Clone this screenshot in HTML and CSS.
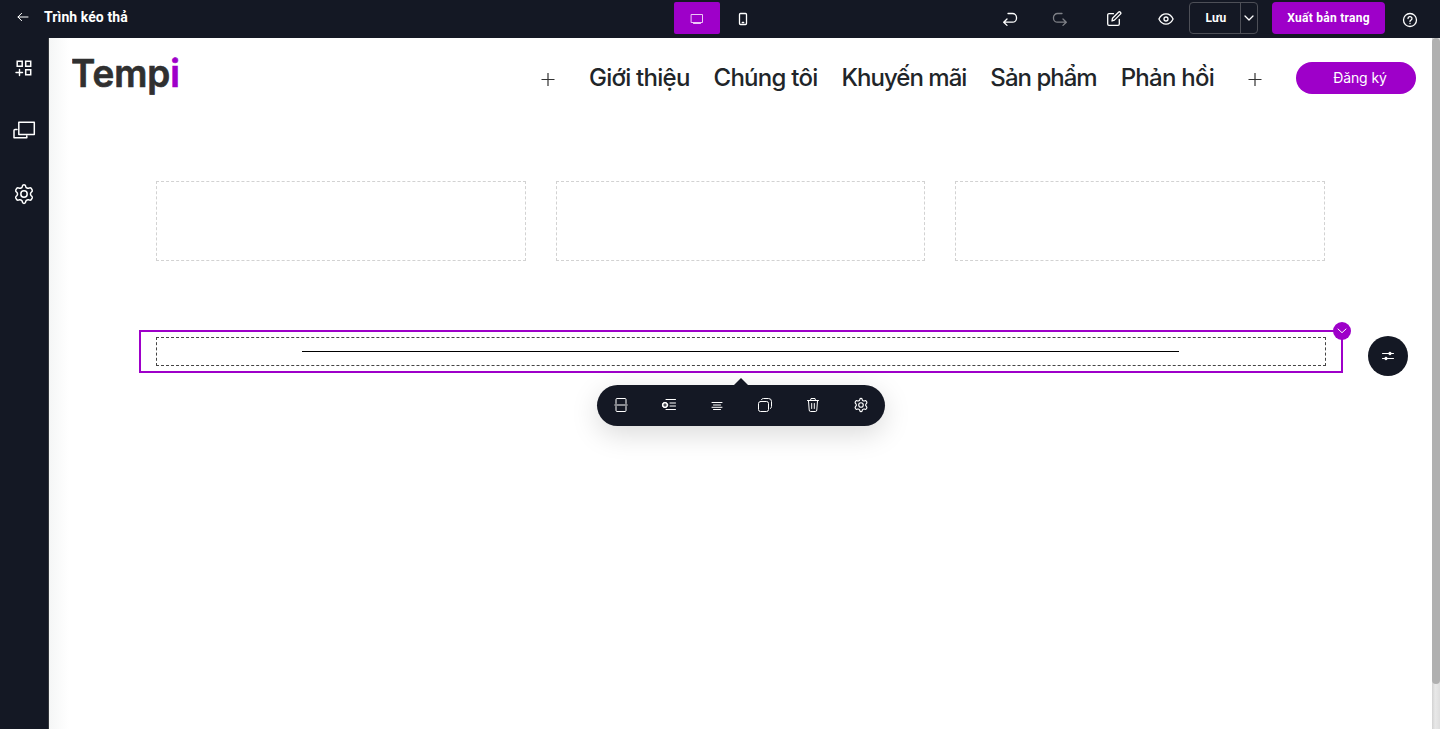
FILE: index.html
```html
<!DOCTYPE html>
<html lang="vi">
<head>
<meta charset="utf-8">
<title>Trình kéo thả</title>
<link rel="stylesheet" href="styles.css">
</head>
<body>
<svg class="defs" width="0" height="0">
  <symbol id="gear" viewBox="0 0 24 24"><path d="M10.3 3.3 Q10.6 2 12 2 Q13.4 2 13.7 3.3 L14 4.5 Q14.2 5.2 15.2 5.6 Q16 6.1 16.8 5.9 L18 5.5 Q19.2 5.2 20 6.4 L20.7 7.7 Q21.2 8.8 20.3 9.7 L19.5 10.5 Q18.9 11.2 18.9 12 Q18.9 12.8 19.5 13.5 L20.3 14.3 Q21.2 15.2 20.7 16.3 L20 17.6 Q19.2 18.8 18 18.5 L16.8 18.1 Q16 17.9 15.2 18.4 Q14.2 18.8 14 19.5 L13.7 20.7 Q13.4 22 12 22 Q10.6 22 10.3 20.7 L10 19.5 Q9.8 18.8 8.8 18.4 Q8 17.9 7.2 18.1 L6 18.5 Q4.8 18.8 4 17.6 L3.3 16.3 Q2.8 15.2 3.7 14.3 L4.5 13.5 Q5.1 12.8 5.1 12 Q5.1 11.2 4.5 10.5 L3.7 9.7 Q2.8 8.8 3.3 7.7 L4 6.4 Q4.8 5.2 6 5.5 L7.2 5.9 Q8 6.1 8.8 5.6 Q9.8 5.2 10 4.5 Z"/><circle cx="12" cy="12" r="3.4"/></symbol>
</svg>
<header class="topbar">
  <div class="topbar-left">
    <svg class="icon" width="12" height="10" viewBox="0 0 12 10"><path d="M11 5H1M4.6 1.3 1 5l3.6 3.7"/></svg>
    <h1 class="title">Trình kéo thả</h1>
  </div>
  <div class="devices">
    <button class="device device-active"><svg class="icon soft" width="14" height="12" viewBox="0 0 14 12"><path d="M1.500 1.500h11v8h-11zM3.500 10.500h7"/></svg></button>
    <button class="device"><svg class="icon strong" width="10" height="14" viewBox="0 0 10 14"><rect x="1.5" y="1.5" width="7" height="11" rx="1"/><path d="M4.300 10.5h1.400"/></svg></button>
  </div>
  <div class="actions">
    <button class="act act-undo"><svg class="icon strong" width="16" height="16" viewBox="0 0 16 16"><path d="M6 2.5h4.5a4 4 0 0 1 4 4v.7a4 4 0 0 1-4 4H2M5 8l-3.300 3.200L5 14.400"/></svg></button>
    <button class="act act-redo"><svg class="icon strong" width="16" height="16" viewBox="0 0 16 16"><path d="M10 2.5H5.500a4 4 0 0 0-4 4v.7a4 4 0 0 0 4 4H14M11 8l3.300 3.200L11 14.400"/></svg></button>
    <button class="act act-edit"><svg class="icon strong" width="16" height="16" viewBox="0 0 16 16"><path d="M7.500 2.700H3a1.300 1.300 0 0 0-1.300 1.300v9A1.300 1.300 0 0 0 3 14.300h9a1.300 1.300 0 0 0 1.300-1.300V8.500"/><path d="M6 10l.5-2.800 6-6a1.300 1.300 0 0 1 1.900 1.900l-6 6z"/></svg></button>
    <button class="act act-view"><svg class="icon strong" width="16" height="12" viewBox="0 0 16 12"><path d="M.9 6C4.200-.8 11.800-.8 15.100 6 11.800 12.800 4.200 12.800.9 6z"/><circle cx="8" cy="6" r="2"/></svg></button>
    <div class="save"><button class="save-main">Lưu</button><button class="save-more"><svg class="icon strong" width="10" height="6" viewBox="0 0 10 6"><path d="M1 1l4 4 4-4"/></svg></button></div>
    <button class="publish">Xuất bản trang</button>
    <button class="act act-help"><svg class="icon strong" width="16" height="16" viewBox="0 0 16 16"><circle cx="8" cy="8" r="6.500"/><path d="M6 6.500a2 1.900 0 1 1 3 1.600q-1 .5-1 1.400M8 11.300v.2"/></svg></button>
  </div>
</header>
<div class="workspace">
  <nav class="rail">
    <svg class="icon rail-icon" width="24" height="24" viewBox="0 0 24 24"><path class="tiles" d="M5.200 5.200h5v5h-5zM13.700 5.200h5v5h-5zM13.700 13.700h5v5h-5z"/><path class="rail-plus" d="M4 16.500h6.500M7.500 13.500v6"/></svg>
    <svg class="icon rail-icon" width="24" height="24" viewBox="0 0 24 24"><path class="mid" d="M6.800 3.200h15.500v12.400H6.800zM5 10.500H3a1 1 0 0 0-1 1v7.300h12.800V17"/></svg>
    <svg class="icon rail-icon rail-gear" width="24" height="24" viewBox="-.8 -.8 25.600 25.600"><use href="#gear" width="24" height="24"/></svg>
  </nav>
  <main class="canvas">
    <header class="site-header">
      <svg class="logo" width="120" height="60" viewBox="0 0 120 60"><text x="-1" y="39" textLength="109" lengthAdjust="spacingAndGlyphs">Temp<tspan class="logo-i">i</tspan></text></svg>
      <div class="menu">
        <svg class="plus" width="14" height="14" viewBox="0 0 14 14"><path d="M.5 7.500h13M7 1v13"/></svg>
        <ul class="links"><li>Giới thiệu</li><li>Chúng tôi</li><li class="tight">Khuyến mãi</li><li class="tight">Sản phẩm</li><li>Phản hồi</li></ul>
        <svg class="plus" width="14" height="14" viewBox="0 0 14 14"><path d="M.5 7.500h13M7 1v13"/></svg>
      </div>
      <button class="signup">Đăng ký</button>
    </header>
    <section class="columns"><div class="column"></div><div class="column"></div><div class="column"></div></section>
    <section class="selected">
      <div class="block"><hr class="rule"></div>
      <span class="badge"><svg class="icon" width="10" height="6" viewBox="0 0 10 6"><path d="M1 1l4 3.700L9 1"/></svg></span>
      <button class="adjust"><svg class="icon adjust-icon" width="14" height="12" viewBox="0 0 14 12"><path d="M1.500 3.500h11M1.500 8.500h11"/><circle cx="9" cy="3.500" r="1.300"/><circle cx="5" cy="8.500" r="1.300"/></svg></button>
      <div class="tools">
        <svg class="icon tool" width="16" height="16" viewBox="0 0 16 16"><path d="M3 6.500V2.500a1 1 0 0 1 1-1h8a1 1 0 0 1 1 1v4M3 9.500v4a1 1 0 0 0 1 1h8a1 1 0 0 0 1-1v-4M1.800 8h12.400"/></svg>
        <svg class="icon tool" width="16" height="16" viewBox="0 0 16 16"><path d="M5 2.500h9.500M9 6h5.500M9 9h5.500M5 12.500h9.500"/><circle class="fill" cx="4" cy="8" r="2.700"/><path class="cut" d="M4 6.700v2.600M2.700 8h2.600"/></svg>
        <svg class="icon tool" width="16" height="16" viewBox="0 0 16 16"><path d="M3 5.500h10M4.500 8h7M3 10.300h10M4.500 12.500h7"/></svg>
        <svg class="icon tool" width="16" height="16" viewBox="0 0 16 16"><rect x="1.500" y="4.500" width="10" height="10" rx="2"/><path d="M4.500 2.500q.5-1 2-1h5a3 3 0 0 1 3 3v5q0 1.500-1 2"/></svg>
        <svg class="icon tool" width="16" height="16" viewBox="0 0 16 16"><path d="M2.500 3.500h11M5.500 3.500l.5-2h4l.5 2M3.500 4l.7 9a1.500 1.500 0 0 0 1.500 1.500h4.600a1.500 1.500 0 0 0 1.500-1.500l.7-9M6.700 6.500v5M9.300 6.500v5"/></svg>
        <svg class="icon tool gear-small" width="16" height="16"><use href="#gear"/></svg>
      </div>
    </section>
  </main>
  <div class="scrollbar"><div class="thumb"></div></div>
</div>
</body>
</html>
```
FILE: styles.css
```css
* { box-sizing: border-box; }
body { margin: 0; height: 729px; overflow: hidden; display: flex; flex-direction: column; background: #fff; font-family: Roboto, "Noto Sans", sans-serif; }
button { margin: 0; padding: 0; border: 0; background: none; color: #fff; font: inherit; }
svg { display: block; flex: none; }
.defs { position: absolute; }
.icon { fill: none; stroke: #fff; stroke-width: 1; stroke-linecap: round; stroke-linejoin: round; }
.strong { stroke-width: 1.3; }
.soft { stroke: #edc8f6; }
.mid { stroke-width: 1.5; }

.topbar { flex: none; height: 38px; display: flex; align-items: flex-start; background: #141824; color: #fff; }
.topbar-left { width: 674px; height: 34px; padding-left: 17px; display: flex; align-items: center; gap: 15px; }
.title { margin: 0; font-size: 14px; line-height: 34px; font-weight: 700; letter-spacing: .08px; }
.devices { display: flex; padding-top: 2px; }
.device { width: 46px; height: 32px; display: grid; place-items: center; padding-top: 2px; }
.device-active { background: #9e00c9; border-radius: 2px; }
.actions { margin-left: auto; padding: 2px 7px 0 0; display: flex; height: 34px; }
.act { display: grid; place-items: center; padding-top: 1px; }
.act-undo, .act-redo { width: 50px; }
.act-redo { opacity: .45; }
.act-edit { width: 58px; }
.act-view { width: 46px; }
.act-help { width: 48px; padding: 3px 0 0 1px; }
.save { width: 69px; height: 32px; display: flex; border: 1px solid #4d4f57; border-radius: 4px; }
.save-main { width: 51px; padding-left: 2px; border-right: 1px solid #4d4f57; font-size: 12px; font-weight: 700; letter-spacing: .2px; }
.save-more { flex: 1; display: grid; place-items: center; }
.publish { width: 113px; height: 32px; margin-left: 14px; border-radius: 4px; background: #9e00c9; font-size: 12px; font-weight: 700; letter-spacing: .27px; }

.workspace { flex: 1; display: flex; min-height: 0; }
.rail { width: 49px; padding-top: 18px; display: flex; flex-direction: column; align-items: center; gap: 39px; background: #141824; border-right: 1px solid #34373c; }
.rail .tiles { stroke-width: 1.5; stroke-linejoin: miter; }
.rail-plus { stroke-width: 1.4; }
.rail-gear { stroke-width: 1.6; }
.canvas { flex: 1; background: linear-gradient(90deg, #f5f6f6 0, #fff 20px); }
.site-header { height: 80px; padding: 0 16px 0 23px; display: flex; align-items: center; }
.logo { font: 600 38px Inter, sans-serif; fill: #303030; stroke: #303030; stroke-width: .7; }
.logo .logo-i { fill: #9e00c9; stroke: #9e00c9; }
.menu { margin-left: auto; margin-right: 34px; display: flex; align-items: center; gap: 34px; }
.plus { fill: none; stroke: #333; stroke-width: 1.2; margin-top: 1px; }
.links { margin: 0; padding: 0; list-style: none; display: flex; gap: 24px; font: 500 24px/36px Inter, sans-serif; color: #212529; letter-spacing: -.75px; white-space: nowrap; }
.links .tight { letter-spacing: -.98px; }
.signup { width: 120px; height: 32px; padding: 0 0 2px 8px; border-radius: 16px; background: #9e00c9; font: 400 14px Inter, sans-serif; letter-spacing: -.1px; }
.columns { width: 1169px; margin: 63px 0 0 107px; display: grid; grid-template-columns: repeat(3, 1fr); gap: 30px; }
.column { height: 80px; border: 1px dashed #d2d2d2; }
.selected { position: relative; width: 1204px; height: 43px; margin: 69px 0 0 90px; padding: 5px 15px; border: 2px solid #9e00c9; }
.block { height: 29px; padding-right: 2px; border: 1px dashed #444; display: flex; justify-content: center; align-items: center; }
.rule { width: 877px; height: 1px; margin: 0; border: 0; background: #000; }
.badge { position: absolute; right: -10px; top: -10px; width: 18px; height: 18px; display: grid; place-items: center; border-radius: 50%; background: #9e00c9; }
.adjust { position: absolute; left: 1227px; top: 4px; width: 40px; height: 40px; display: grid; place-items: center; border-radius: 50%; background: #141824; }
.adjust-icon circle { fill: #fff; }
.tools { position: absolute; left: 456px; top: 53px; width: 288px; height: 41px; padding-bottom: 1px; display: grid; grid-template-columns: repeat(6, 48px); place-items: center; border-radius: 21px; background: #141824; box-shadow: 0 8px 28px rgba(0,0,0,.15); }
.tools::before { content: ""; position: absolute; left: 136px; top: -7px; border: 8px solid transparent; border-top: 0; border-bottom-color: #141824; }
.fill { fill: #fff; }
.cut { stroke: #141824; }
.gear-small { stroke-width: 1.7; }
.scrollbar { width: 8px; background: linear-gradient(90deg, #d2d2d2, #e8e8e8 40%, #dedede); }
.thumb { height: 646px; border-radius: 4px; background: #b0b0b0; }
```
